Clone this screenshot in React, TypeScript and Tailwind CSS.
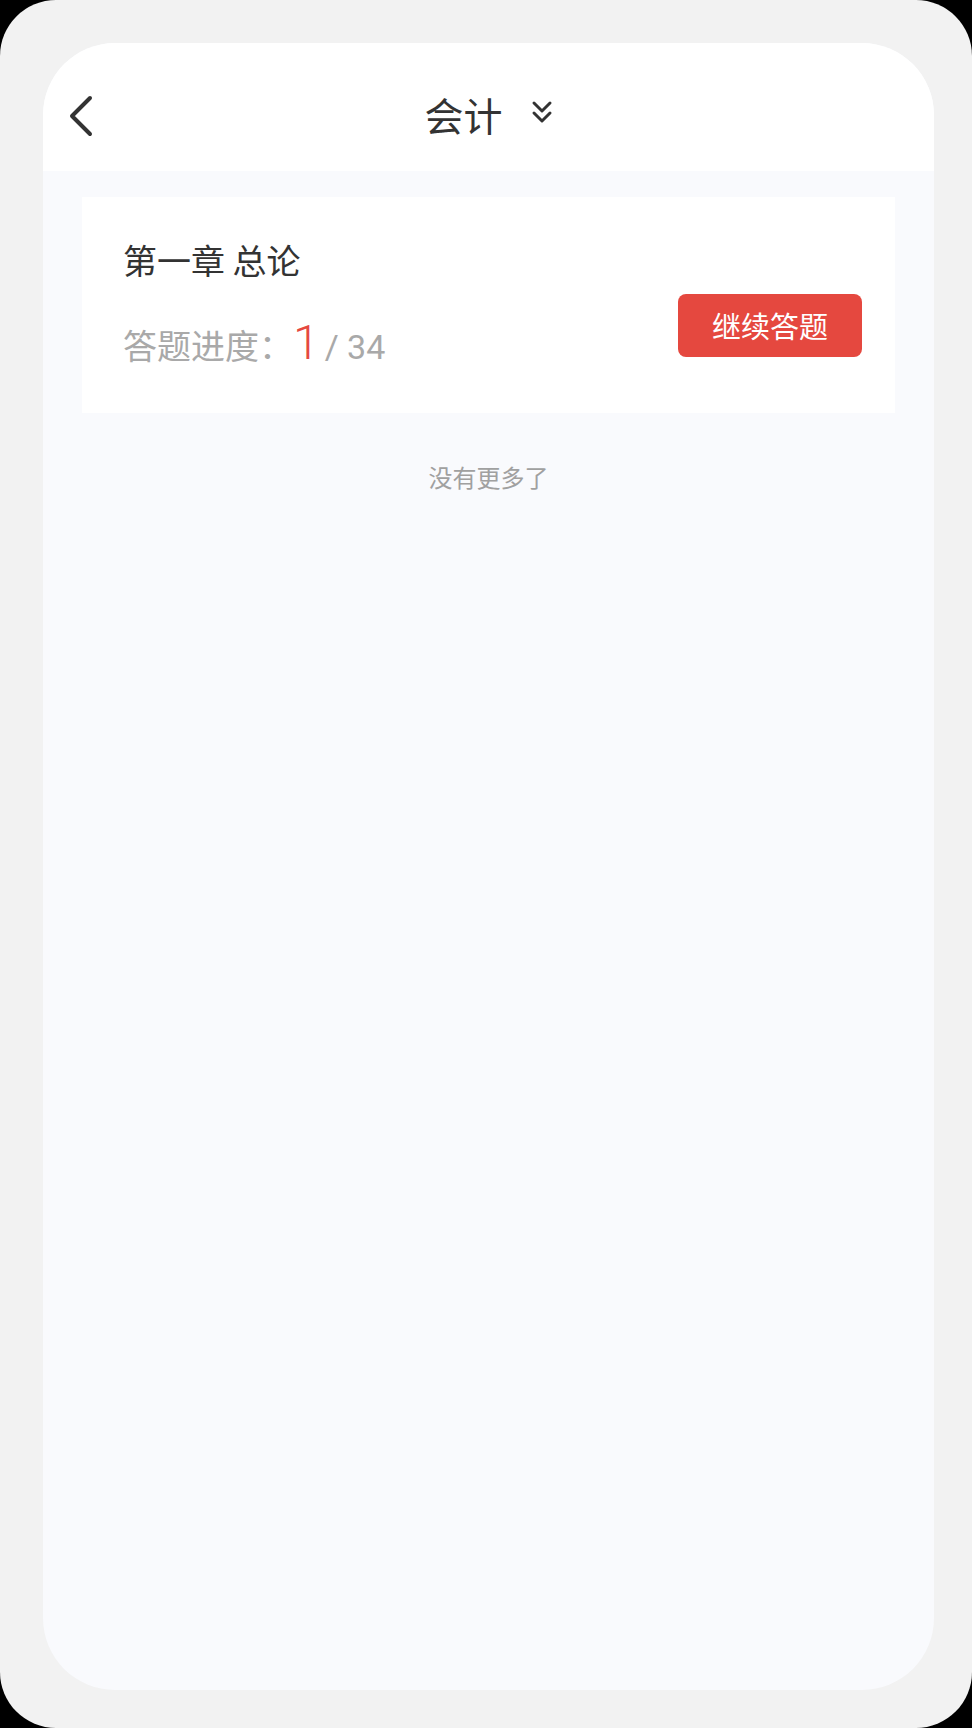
import React from "react";

export default function App() {
    return (
        <div className="w-[972px] h-[1728px] bg-black" style={{ fontFamily: '"Noto Sans CJK SC", "Noto Sans", sans-serif' }}>
            <div className="h-full rounded-[56px] bg-[#f2f2f2] pl-[43px] pr-[38px] pt-[43px] pb-[38px]">
                <div className="h-full flex flex-col rounded-[72px] overflow-hidden bg-[#f9fafd]">

                    {/* Kopfzeile */}
                    <div className="relative h-[128px] shrink-0 bg-white flex items-center justify-center">
                        <svg className="absolute left-[24px] top-[52px]" width="28" height="42" viewBox="0 0 28 42" fill="none">
                            <polyline points="23,3 5,21 23,39" stroke="#333333" strokeWidth="4" strokeLinecap="round" strokeLinejoin="round" />
                        </svg>
                        <div className="flex items-center gap-[28px] mt-[14px]">
                            <span className="text-[39px] leading-[44px] text-[#333333]">会计</span>
                            <svg width="22" height="24" viewBox="0 0 22 24" fill="none" className="mt-[-4px]">
                                <polyline points="3,3 11,11 19,3" stroke="#333333" strokeWidth="3" strokeLinecap="round" strokeLinejoin="round" />
                                <polyline points="3,13 11,21 19,13" stroke="#333333" strokeWidth="3" strokeLinecap="round" strokeLinejoin="round" />
                            </svg>
                        </div>
                    </div>

                    {/* Karte */}
                    <div className="mx-[39px] mt-[26px] bg-white flex items-end justify-between pl-[41px] pr-[33px] pt-[43px] pb-[45px]">
                        <div className="flex flex-col">
                            <div className="text-[34px] leading-[40px] text-[#333333]">第一章 总论</div>
                            <div className="mt-[38px] h-[50px] flex items-baseline text-[#a9a9a9]">
                                <span className="text-[34px]">答题进度：</span>
                                <span className="text-[48px] leading-[50px] text-[#e5483f] mr-[5px]" style={{ fontFamily: '"Roboto", sans-serif', fontWeight: 300 }}>1</span>
                                <span className="text-[34px]" style={{ fontFamily: '"Roboto", sans-serif' }}>/ 34</span>
                            </div>
                        </div>
                        <button className="mb-[11px] w-[184px] h-[63px] rounded-[8px] bg-[#e5483f] text-white text-[29px] leading-[63px]">
                            继续答题
                        </button>
                    </div>

                    <div className="mt-[48px] text-center text-[24px] leading-[32px] text-[#a0a0a0]">没有更多了</div>
                </div>
            </div>
        </div>
    );
}
